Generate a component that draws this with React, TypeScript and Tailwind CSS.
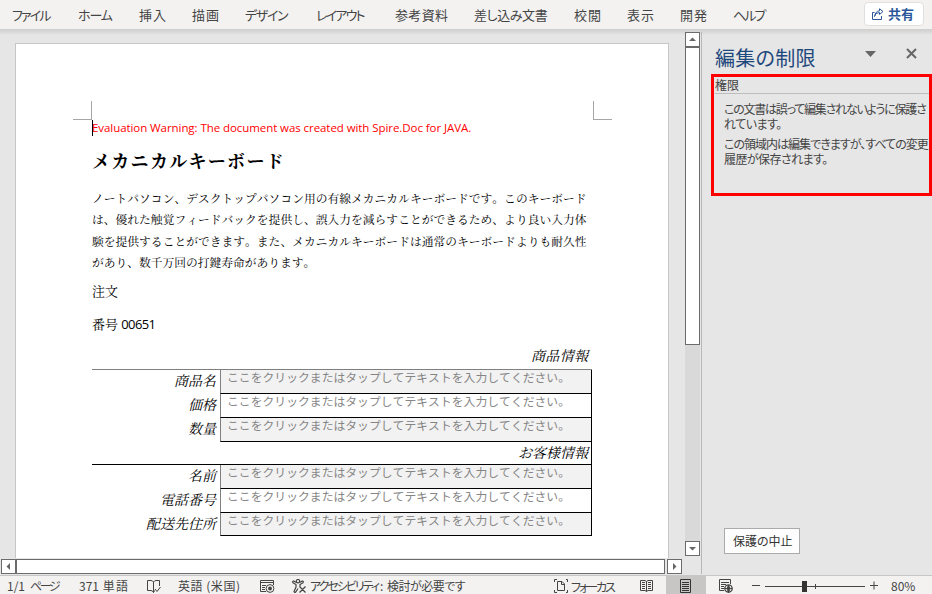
import { ReactNode } from "react";

const menu = [
    { label: "ファイル", className: "w-[37px] ml-3 mr-px tracking-[-2.5px]" },
    { label: "ホーム", className: "w-[33px] ml-7 mr-px tracking-[-2px]" },
    { label: "挿入", className: "w-[27px] ml-[27px]" },
    { label: "描画", className: "w-[27px] ml-[26px]" },
    { label: "デザイン", className: "w-[41px] ml-[26px] mr-[2px] tracking-[-2.5px]" },
    { label: "レイアウト", className: "w-[47px] ml-[28px] mr-[3px] tracking-[-2.5px]" },
    { label: "参考資料", className: "w-[53px] ml-[29px]" },
    { label: "差し込み文書", className: "w-[73px] ml-[26px] mr-px tracking-[-0.7px]" },
    { label: "校閲", className: "w-[27px] ml-[26px]" },
    { label: "表示", className: "w-[27px] ml-[26px]" },
    { label: "開発", className: "w-[27px] ml-[26px]" },
    { label: "ヘルプ", className: "w-[31px] ml-[26px] tracking-[-2.5px]" },
];

const body = [
    "ノートパソコン、デスクトップパソコン用の有線メカニカルキーボードです。このキーボード",
    "は、優れた触覚フィードバックを提供し、誤入力を減らすことができるため、より良い入力体",
    "験を提供することができます。また、メカニカルキーボードは通常のキーボードよりも耐久性",
];

const placeholder = "ここをクリックまたはタップしてテキストを入力してください。";

// spreads the characters over the width given in className
function Fit({ className, children }: { className: string; children: ReactNode }) {
    return <span className={`block shrink-0 whitespace-nowrap [text-align-last:justify] ${className}`}>{children}</span>;
}

function Field({ label, width, shaded, last }: { label: string; width: string; shaded?: boolean; last?: boolean }) {
    return (
        <div className={`flex ${last ? "h-[23px]" : "h-6"}`}>
            <div className="w-32 pr-1 flex justify-end">
                <Fit className={`${width} text-[14px] leading-[24px] italic`}>{label}</Fit>
            </div>
            <div className={`w-[372px] border-l border-l-[#7f7f7f] border-r border-r-black border-b border-b-black pl-[6px] ${shaded ? "bg-[#f2f2f2]" : "bg-white"}`}>
                <Fit className="-mt-px w-[343px] text-[11.8px] leading-[16px] font-normal text-[#858585] [font-family:'Noto_Sans_CJK_JP',sans-serif]">{placeholder}</Fit>
            </div>
        </div>
    );
}

function Document() {
    return (
        <div className="w-[654px] h-full bg-white border border-b-0 border-[#c6c6c6] text-black [font-family:'Liberation_Serif','Noto_Serif_CJK_JP','Noto_Sans_CJK_JP',serif]">
            <div className="flex justify-between w-[539px] h-[76px] ml-[57px] items-end">
                <div className="w-[19px] h-[19px] border-r border-b border-[#a6a6a6]" />
                <div className="w-[19px] h-[19px] border-l border-b border-[#a6a6a6]" />
            </div>
            <div className="ml-[76px] w-[500px]">
                <div className="flex h-4 items-center border-l border-black">
                    <p className="-ml-px w-[379px] whitespace-nowrap text-[11.5px] leading-4 font-medium tracking-[-0.07px] text-[#ff0000] [font-family:'Open_Sans',sans-serif]">
                        Evaluation Warning: The document was created with Spire.Doc for JAVA.
                    </p>
                </div>
                <h1 className="mt-[14px] w-[193px] text-[18px] leading-6 font-bold whitespace-nowrap tracking-[1.3px]">メカニカルキーボード</h1>
                <div className="mt-[15px] text-[11.75px] leading-[21.3px]">
                    {body.map((line) => (
                        <Fit key={line} className="w-[494.500px]">{line}</Fit>
                    ))}
                    <p className="whitespace-nowrap">があり、数千万回の打鍵寿命があります。</p>
                </div>
                <p className="mt-[8px] text-[13px] leading-5">注文</p>
                <p className="mt-3 text-[13px] leading-5">
                    番号 <span className="text-[13px] [font-family:'Open_Sans',sans-serif] tracking-[-0.6px]">00651</span>
                </p>
                <div className="h-[34.800px] mt-0 flex items-end justify-end pr-1 border-b border-[#7f7f7f]">
                    <Fit className="w-[57px] text-[14px] leading-6 italic">商品情報</Fit>
                </div>
                <Field label="商品名" width="w-[42px]" shaded />
                <Field label="価格" width="w-[28px]" />
                <Field label="数量" width="w-[28px]" shaded />
                <div className="flex justify-end h-[23px] pr-[3px] border-b border-r border-black">
                    <Fit className="w-[70px] text-[14px] leading-[23px] italic">お客様情報</Fit>
                </div>
                <Field label="名前" width="w-[28px]" shaded />
                <Field label="電話番号" width="w-[56px]" />
                <Field label="配送先住所" width="w-[70px]" shaded last />
            </div>
        </div>
    );
}

function ScrollButton({ d }: { d: string }) {
    return (
        <div className="w-[15px] h-[15px] shrink-0 bg-white border border-[#6b6b6b]">
            <svg width="13" height="13" viewBox="0 0 13 13"><path d={d} fill="#666" /></svg>
        </div>
    );
}

function Pane() {
    return (
        <aside className="w-[231px] h-full pt-[3px]">
            <div className="h-[542px] border-l border-[#b8b8b8] flex flex-col">
                <div className="flex h-[42px] pl-[13px] pt-[14px]">
                    <Fit className="w-[100px] text-[20px] leading-6 text-[#1f497d] tracking-[-0.5px]">編集の制限</Fit>
                    <svg className="ml-[50px] mt-[5px]" width="11" height="6" viewBox="0 0 11 6"><path d="M0 0h11L5.500 6z" fill="#666" /></svg>
                    <svg className="ml-[30px] mt-[2px]" width="11" height="11" viewBox="0 0 11 11"><path d="M1 1l9 9M10 1l-9 9" stroke="#666" strokeWidth="2" fill="none" /></svg>
                </div>
                <div className="ml-[9px] w-[221px] h-[122px] border-[3px] border-[#ff0000] text-[#444] text-[12px]">
                    <div className="ml-[1px] h-[17px] border-b border-[#bdbdbd]">
                        <Fit className="w-[24px] leading-[16px]">権限</Fit>
                    </div>
                    <div className="ml-[10px] mt-[7px] leading-[15px]">
                        <Fit className="w-[201px] tracking-[-1.8px]">この文書は誤って編集されないように保護さ</Fit>
                        <Fit className="w-[57px] tracking-[-1.2px]">れています。</Fit>
                        <Fit className="mt-[5px] w-[203px] tracking-[-1.8px]">この領域内は編集できますが、すべての変更</Fit>
                        <Fit className="w-[103px] tracking-[-1.2px]">履歴が保存されます。</Fit>
                    </div>
                </div>
                <button className="mt-auto mb-[20px] ml-[22px] w-[76px] h-[26px] bg-[#fdfdfd] border border-[#ababab] flex justify-center items-center text-[12px] text-[#333]">
                    <Fit className="w-[58px] leading-4 -mt-px">保護の中止</Fit>
                </button>
            </div>
        </aside>
    );
}

function StatusBar() {
    return (
        <footer className="h-[19px] border-t border-[#c8c6c4] bg-[#f3f2f1] flex overflow-hidden text-[12px] leading-[20px] text-[#444]">
            <div className="ml-[7px] w-[53px] shrink-0 flex">
                <span className="w-[23px]">1/1</span>
                <Fit className="w-[28px] tracking-[-2.5px]">ページ</Fit>
            </div>
            <Fit className="ml-[19px] w-[49px]">371 単語</Fit>
            <svg className="ml-[19px] mt-[3px] shrink-0" width="14" height="15" viewBox="0 0 14 15" fill="none" stroke="#444">
                <path d="M6.500 3v10.500M6.500 3Q5.500 1.500 4 1.500H.5v10H4q1.500 0 2.500 2Q7 12 8 11.500M6.500 3Q7.500 1.500 9 1.500h3.500V7M8 10l2 2.500L13.500 8" />
            </svg>
            <Fit className="ml-[17px] w-[62px]">英語 (米国)</Fit>
            <svg className="ml-5 mt-[4px] shrink-0" width="15" height="14" viewBox="0 0 15 14" fill="none" stroke="#444">
                <path d="M6 11.500H.5v-11h13V5M.5 2.500h13M2 5.500h4M2 7.500h3M2 9.500h3" />
                <circle cx="10" cy="8.500" r="3.900" fill="#f3f2f1" />
                <circle cx="10" cy="8.500" r="1.900" fill="#444" stroke="none" />
            </svg>
            <svg className="ml-[17px] mt-[3px] shrink-0" width="15" height="15" viewBox="0 0 15 15" fill="none" stroke="#444" strokeWidth="1.200">
                <circle cx="6" cy="2.200" r="1.700" />
                <path d="M4.500 3.500L1.500 2Q0 2.500 1 3.700L4 5.500V8l-2 4.500q.5 1.500 1.700.5L6 9.500M7.500 3.500L10.500 2q1.500.5.500 1.700L8 5.500v2M7.500 7.500l6 6M13.500 7.500l-6 6" />
            </svg>
            <div className="ml-[3px] w-[156px] shrink-0 flex">
                <Fit className="w-[67px] tracking-[-3px]">アクセシビリティ</Fit>
                <span className="w-[10px] pl-[3px]">:</span>
                <Fit className="w-[78px] tracking-[-0.6px]">検討が必要です</Fit>
            </div>
            <svg className="ml-[88px] mt-[3px] shrink-0" width="15" height="14" viewBox="0 0 15 14" fill="none" stroke="#444">
                <path d="M3 .5H.5V3M12 .5h1.500V3M.5 11v2.500H3M13.500 11v2.500H12M3.500 2.500H8L10.500 5v6.500h-7zM7.500 2.500V5.500h3" />
            </svg>
            <Fit className="ml-[2px] mr-[3px] w-[42px] leading-[21px] tracking-[-3px]">フォーカス</Fit>
            <svg className="ml-[24px] mt-[3px] shrink-0" width="13" height="13" viewBox="0 0 13 13" fill="none" stroke="#444">
                <path d="M.5 1.500H5L6.500 2.500 8 1.500h4.500v10H8L6.500 12.500 5 11.500H.5zM6.500 2.500v10M2 3.500h3M2 5.500h3M2 7.500h3M2 9.500h3M8 3.500h3M8 5.500h3M8 7.500h3M8 9.500h3" />
            </svg>
            <div className="ml-[13px] w-10 h-full shrink-0 bg-[#c8c6c4] flex justify-center">
                <svg className="mt-[3px]" width="12" height="14" viewBox="0 0 12 14" fill="none" stroke="#333">
                    <path d="M.5.5h10v13H.5zM2 3.500h7M2 5.500h7M2 7.500h7M2 9.500h7M2 11.500h7" />
                </svg>
            </div>
            <svg className="ml-[13px] mt-[3px] shrink-0" width="14" height="14" viewBox="0 0 14 14" fill="none" stroke="#444">
                <path d="M5 11.500H.5V.5h11V5M2 3.500h8M2 5.500h5M2 7.500h3M2 9.500h3" />
                <circle cx="9.500" cy="9.500" r="3.700" fill="#f3f2f1" strokeWidth="1.300" />
                <path d="M6 9.500h7M9.500 6v7.500M9.500 6q-3 3.500 0 7.500M9.500 6q3 3.500 0 7.500" />
            </svg>
            <svg className="ml-[19px] mt-[4px] shrink-0" width="127" height="12" viewBox="0 0 127 12" stroke="#444">
                <path d="M0 5.500h8M13 6.500h100M118 5.500h8M122 1.500v8M63.500 4v5" />
                <path d="M50 1h5v11h-5z" fill="#333" stroke="none" />
            </svg>
            <Fit className="ml-[12px] w-[26px] text-[12px]">80%</Fit>
        </footer>
    );
}

export default function App() {
    return (
        <div className="w-[932px] h-[594px] flex flex-col overflow-hidden bg-[#e6e6e6] text-[#444] [font-family:'Noto_Sans_CJK_JP',sans-serif] [font-feature-settings:'palt']">
            <header className="h-[29px] shrink-0 bg-[#f3f2f1] flex text-[13px] leading-[29px]">
                {menu.map((item) => (
                    <Fit key={item.label} className={item.className}>{item.label}</Fit>
                ))}
                <button className="ml-auto mr-2 mt-[2px] w-[60px] h-6 shrink-0 bg-white border border-[#e1dfdd] rounded-sm flex items-center pl-[6px] text-[#2b579a]">
                    <svg width="13" height="13" viewBox="0 0 13 13" fill="none" stroke="currentColor">
                        <path d="M3.500 4.500h-2v7h9V8M3.500 8.500Q4 4.500 8.500 4.500V6.500L12 3.500 8.500.8v2Q4.500 3 3.500 8.500z" />
                    </svg>
                    <Fit className="ml-1 w-[26px] text-[13px] leading-5 font-bold">共有</Fit>
                </button>
            </header>
            <main className="flex h-[546px] bg-linear-to-b from-[#cdcdcd] to-[#e6e6e6] to-[6px]">
                <div className="w-[701px] flex flex-col">
                    <div className="flex h-[529px]">
                        <div className="w-[685px] pl-[15px] pt-[14px]">
                            <div className="h-[515px] overflow-hidden [font-feature-settings:normal] [font-kerning:none]">
                                <Document />
                            </div>
                        </div>
                        <div className="w-[15px] h-[524px] mt-[3px] bg-[#d9d9d9] flex flex-col">
                            <ScrollButton d="M3 8h7L6.500 4.500z" />
                            <div className="h-[298px] bg-white border border-[#6b6b6b]" />
                            <div className="mt-auto">
                                <ScrollButton d="M3 5h7L6.500 8.500z" />
                            </div>
                        </div>
                    </div>
                    <div className="flex h-[17px] pl-px pt-px">
                        <ScrollButton d="M8 3v7L4.500 6.500z" />
                        <div className="w-[649px] h-[15px] bg-white border border-[#6b6b6b] mr-[2px]" />
                        <ScrollButton d="M5 3v7L8.500 6.500z" />
                    </div>
                </div>
                <Pane />
            </main>
            <StatusBar />
        </div>
    );
}
